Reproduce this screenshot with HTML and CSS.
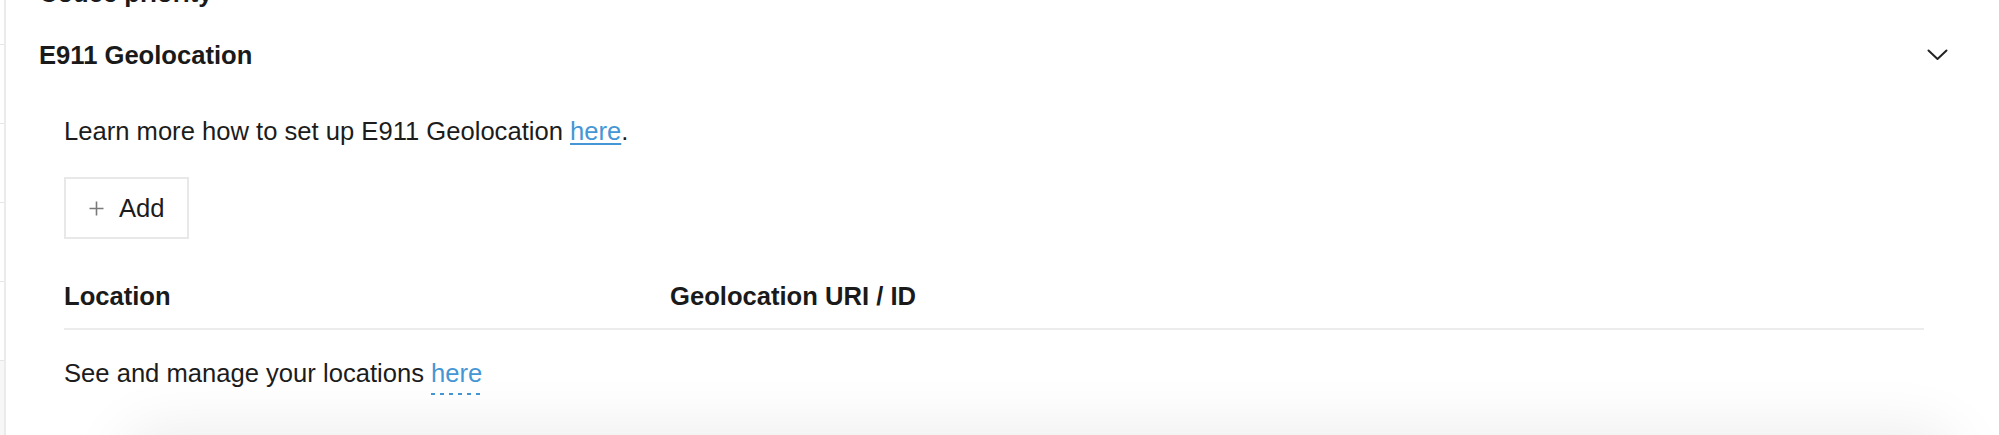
FILE: index.html
```html
<!DOCTYPE html>
<html lang="en">
<head>
<meta charset="utf-8">
<title>E911 Geolocation</title>
<link rel="stylesheet" href="styles.css">
</head>
<body>
<div class="page">
  <aside class="sidebar">
    <div class="side-row"></div>
    <div class="side-row"></div>
    <div class="side-row"></div>
    <div class="side-row"></div>
    <div class="side-row"></div>
    <div class="side-row side-row-active"></div>
  </aside>
  <main class="main">
    <div class="sections">
      <section class="acc">
        <div class="acc-header">
          <h2 class="acc-title">Codec priority</h2>
        </div>
      </section>
      <section class="acc">
        <div class="acc-header">
          <h2 class="acc-title">E911 Geolocation</h2>
          <svg class="chevron" width="21" height="12" viewBox="0 0 21 12" aria-hidden="true">
            <polyline points="1.5,1.5 10.5,10 19.5,1.5" fill="none" stroke="#222" stroke-width="2" stroke-linecap="round" stroke-linejoin="round"/>
          </svg>
        </div>
        <div class="acc-body">
          <p class="intro">Learn more how to set up E911 Geolocation <a class="link" href="#">here</a>.</p>
          <button class="add-btn" type="button">
            <svg class="plus" width="15" height="15" viewBox="0 0 15 15" aria-hidden="true">
              <path d="M7.5 0.5 V14.5 M0.5 7.5 H14.5" stroke="#7a7a7a" stroke-width="1.6" fill="none"/>
            </svg>
            <span>Add</span>
          </button>
          <div class="table">
            <div class="thead">
              <div class="th">Location</div>
              <div class="th">Geolocation URI / ID</div>
            </div>
            <div class="empty-row">See and manage your locations <a class="dash-link" href="#">here</a></div>
          </div>
        </div>
      </section>
    </div>
  </main>
  <div class="footer-shadow"></div>
</div>
</body>
</html>
```

FILE: styles.css
```css
html, body {
  margin: 0;
  padding: 0;
  background: #ffffff;
}

body {
  font-family: "Liberation Sans", Arial, Helvetica, sans-serif;
  font-size: 25.6px;
  line-height: 30px;
  color: #1c1c1c;
}

.page {
  position: relative;
  display: flex;
  height: 435px;
  overflow: hidden;
}

.sidebar {
  width: 4px;
  flex: 0 0 4px;
  border-right: 2px solid #ebebeb;
  display: flex;
  flex-direction: column;
  margin-top: -34px;
}

.side-row {
  height: 78px;
  flex: 0 0 78px;
  border-bottom: 1px solid #e6e6e6;
}

.side-row-active {
  background: #f7f7f7;
  border-bottom: none;
}

.main {
  flex: 1;
  padding: 0 52px 0 33px;
}

.sections {
  margin-top: -38px;
}

.acc-header {
  display: flex;
  align-items: center;
  justify-content: space-between;
  padding: 16px 0;
}

.acc-title {
  margin: 0;
  font-size: 25.6px;
  line-height: 30px;
  font-weight: 700;
  color: #1a1a1a;
}

.chevron {
  display: block;
  margin-right: -1px;
}

.acc-body {
  padding: 30px 23px 0 25px;
}

.intro {
  margin: 0;
}

.link {
  color: #4596d4;
  text-decoration: underline;
  text-decoration-thickness: 1.5px;
  text-underline-offset: 3px;
}

.add-btn {
  margin-top: 31px;
  display: inline-flex;
  align-items: center;
  gap: 15px;
  height: 62px;
  box-sizing: border-box;
  padding: 0 22px 0 23px;
  border: 2px solid #e8e8e8;
  background: #ffffff;
  font-family: inherit;
  font-size: 25.6px;
  line-height: 30px;
  color: #1c1c1c;
  cursor: pointer;
}

.plus {
  display: block;
}

.table {
  margin-top: 42px;
}

.thead {
  display: grid;
  grid-template-columns: 606px 1fr;
  padding-bottom: 17px;
  border-bottom: 2px solid #ececec;
}

.th {
  font-weight: 700;
  color: #1a1a1a;
}

.empty-row {
  padding-top: 28px;
}

.dash-link {
  color: #4596d4;
  text-decoration: none;
  padding-bottom: 8px;
  background-image: linear-gradient(to right, #4596d4 0, #4596d4 4.5px, transparent 4.5px);
  background-size: 9px 2px;
  background-repeat: repeat-x;
  background-position: 0 100%;
}

.footer-shadow {
  position: absolute;
  left: 120px;
  right: 40px;
  top: 100%;
  height: 80px;
  box-shadow: 0 -6px 60px rgba(0, 0, 0, 0.08);
  border-radius: 40px;
}
```
